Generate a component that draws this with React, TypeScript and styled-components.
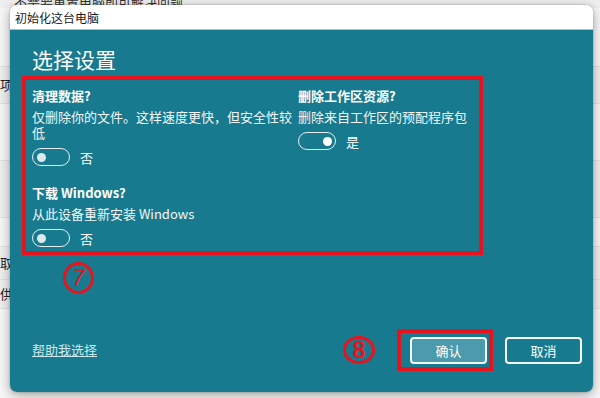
import React from "react";
import styled, { createGlobalStyle } from "styled-components";

const GlobalStyle = createGlobalStyle`
  html, body { margin: 0; padding: 0; }
  body {
    width: 600px;
    height: 398px;
    overflow: hidden;
    background: #efefef;
    font-family: "Noto Sans CJK SC", "Noto Sans", sans-serif;
  }
`;

const Screen = styled.div`
  position: relative;
  width: 600px;
  height: 398px;
  overflow: hidden;
  background: #efefef;
`;

const BackPage = styled.div`
  display: flex;
  flex-direction: column;
  color: #222;
  font-size: 13px;
`;

const BackRow = styled.div<{ $h: number; $light?: boolean }>`
  height: ${(p) => p.$h}px;
  display: flex;
  align-items: center;
  background: ${(p) => (p.$light ? "#f7f7f7" : "#efefef")};
  border-bottom: 1px solid #e2e2e2;
  line-height: 16px;
`;

const BackTop = styled.div`
  height: 14px;
  margin-top: -6px;
  padding-left: 14px;
  font-size: 13px;
  line-height: 16px;
  color: #333;
`;

const Dialog = styled.div`
  position: absolute;
  left: 10px;
  top: 5px;
  width: 583px;
  height: 387px;
  border-radius: 7px;
  overflow: hidden;
  display: flex;
  flex-direction: column;
  box-shadow: 0 3px 12px rgba(0, 0, 0, 0.35), 0 0 2px rgba(0, 0, 0, 0.3);
`;

const TitleBar = styled.div`
  height: 24px;
  flex: none;
  background: #ffffff;
  display: flex;
  align-items: center;
  padding-left: 5px;
  font-size: 12px;
  color: #1a1a1a;
  border-bottom: 1px solid #9fc3cb;
`;

const Body = styled.div`
  flex: 1;
  background: #177a8e;
  color: #ffffff;
  display: flex;
  flex-direction: column;
  padding: 15px 11px 21px 12px;
`;

const Heading = styled.h1`
  margin: 0 0 0 10px;
  font-size: 21px;
  line-height: 28px;
  font-weight: 400;
  color: #ffffff;
`;

const Highlight = styled.div`
  margin-top: 3px;
  width: 461px;
  box-sizing: border-box;
  border: 4px solid #e8131c;
  padding: 7px 4px 4px 6px;
  display: grid;
  grid-template-columns: 264px 1fr;
  column-gap: 2px;
`;

const Column = styled.div`
  display: flex;
  flex-direction: column;
`;

const Option = styled.div<{ $gap?: boolean }>`
  display: flex;
  flex-direction: column;
  margin-top: ${(p) => (p.$gap ? 18 : 0)}px;
`;

const OptTitle = styled.div`
  font-size: 13px;
  line-height: 18px;
  font-weight: 700;
  margin-bottom: 4px;
`;

const OptDesc = styled.div`
  font-size: 13px;
  line-height: 16px;
  color: #f2f7f8;
`;

const ToggleRow = styled.div`
  display: flex;
  align-items: center;
  gap: 10px;
  margin-top: 7px;
  height: 18px;
  font-size: 13px;
`;

const Track = styled.div<{ $on?: boolean }>`
  width: 38px;
  height: 18px;
  box-sizing: border-box;
  border: 1.5px solid #e6eef0;
  border-radius: 9px;
  display: flex;
  align-items: center;
  justify-content: ${(p) => (p.$on ? "flex-end" : "flex-start")};
  padding: 0 3.5px;
`;

const Knob = styled.div<{ $on?: boolean }>`
  width: 9px;
  height: 9px;
  border-radius: 50%;
  background: ${(p) => (p.$on ? "#ffffff" : "#dfe9ec")};
`;

const Circled = styled.div<{ $w: number; $h: number }>`
  width: ${(p) => p.$w}px;
  height: ${(p) => p.$h}px;
  box-sizing: border-box;
  border: 3.5px solid #e8131c;
  border-radius: 50%;
  color: #e8131c;
  display: flex;
  align-items: center;
  justify-content: center;
  font-family: "Liberation Sans", sans-serif;
  font-size: 23px;
  font-weight: 700;
  line-height: 1;
  flex: none;
`;

const Seven = styled(Circled)`
  margin: 7px 0 0 41px;
  font-style: italic;
  font-weight: 400;
`;

const Footer = styled.div`
  margin-top: auto;
  display: flex;
  align-items: center;
`;

const HelpLink = styled.a`
  margin-left: 10px;
  font-size: 13px;
  line-height: 16px;
  color: #cde9ef;
  text-decoration: underline;
  cursor: pointer;
`;

const Spacer = styled.div`
  flex: 1;
`;

const ButtonMark = styled.div`
  border: 4px solid #e8131c;
  padding: 4px 2px 3px 9px;
  margin-left: 22px;
  display: flex;
`;

const Button = styled.button<{ $primary?: boolean }>`
  width: 77px;
  height: 27px;
  box-sizing: border-box;
  border: 2px solid #f4f8f9;
  border-radius: 4px;
  background: ${(p) => (p.$primary ? "#4c9bad" : "transparent")};
  color: #ffffff;
  font-family: "Noto Sans CJK SC", sans-serif;
  font-size: 13px;
  display: flex;
  align-items: center;
  justify-content: center;
  padding: 0;
`;

const CancelButton = styled(Button)`
  margin-left: 12px;
`;

type Opt = {
  title: string;
  desc: React.ReactNode;
  on: boolean;
  label: string;
  gap?: boolean;
};

const OptionBlock = ({ title, desc, on, label, gap }: Opt) => (
  <Option $gap={gap}>
    <OptTitle>{title}</OptTitle>
    <OptDesc>{desc}</OptDesc>
    <ToggleRow>
      <Track $on={on}>
        <Knob $on={on} />
      </Track>
      <span>{label}</span>
    </ToggleRow>
  </Option>
);

export default function App() {
  return (
    <>
      <GlobalStyle />
      <Screen>
        <BackPage>
          <BackTop>不需要重置电脑即可解决问题</BackTop>
          <BackRow $h={58} $light />
          <BackRow $h={36}>项</BackRow>
          <BackRow $h={56} $light />
          <BackRow $h={56} />
          <BackRow $h={28} $light />
          <BackRow $h={32}>取</BackRow>
          <BackRow $h={28}>供</BackRow>
          <BackRow $h={100} $light />
        </BackPage>
        <Dialog>
          <TitleBar>初始化这台电脑</TitleBar>
          <Body>
            <Heading>选择设置</Heading>
            <Highlight>
              <Column>
                <OptionBlock
                  title="清理数据?"
                  desc="仅删除你的文件。这样速度更快，但安全性较低"
                  on={false}
                  label="否"
                />
                <OptionBlock
                  title="下载 Windows?"
                  desc="从此设备重新安装 Windows"
                  on={false}
                  label="否"
                  gap
                />
              </Column>
              <Column>
                <OptionBlock
                  title="删除工作区资源?"
                  desc="删除来自工作区的预配程序包"
                  on={true}
                  label="是"
                />
              </Column>
            </Highlight>
            <Seven $w={31} $h={32}>7</Seven>
            <Footer>
              <HelpLink>帮助我选择</HelpLink>
              <Spacer />
              <Circled $w={32} $h={28}>8</Circled>
              <ButtonMark>
                <Button $primary>确认</Button>
              </ButtonMark>
              <CancelButton>取消</CancelButton>
            </Footer>
          </Body>
        </Dialog>
      </Screen>
    </>
  );
}
